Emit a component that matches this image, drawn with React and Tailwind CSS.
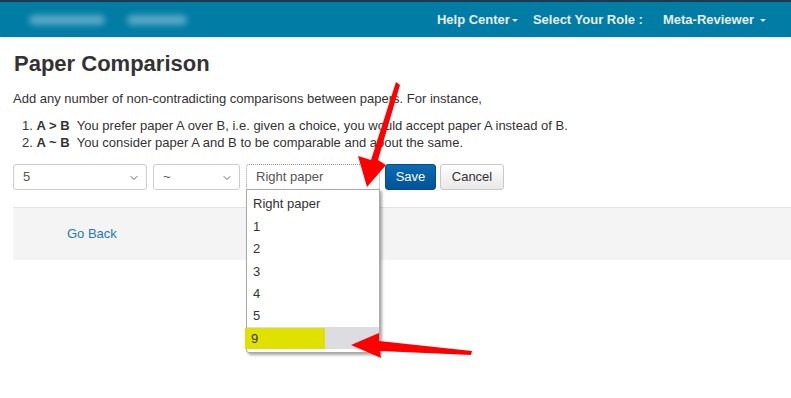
import { ChevronDown } from "lucide-react";

const font = { fontFamily: '"Liberation Sans", Arial, sans-serif' };

const Caret = () => (
	<span className="inline-block ml-[2px] align-middle w-0 h-0 border-l-[3px] border-r-[3px] border-t-[3px] border-l-transparent border-r-transparent border-t-[#dfe9ef]" />
);

const FakeSelect = ({ value, width, focused }) => (
	<div
		className={`relative flex items-center h-[26px] rounded-[3px] bg-white text-[13px] text-[#555] pl-[9px] ${
			focused ? "border border-dotted border-[#999]" : "border border-[#ccc]"
		}`}
		style={{ width }}>
		<span>{value}</span>
		{!focused && (
			<ChevronDown size={12} strokeWidth={2} className="absolute right-[6px] top-[7px] text-[#666]" />
		)}
	</div>
);

export default function App() {
	const options = ["Right paper", "1", "2", "3", "4", "5"];

	return (
		<div className="relative w-[791px] h-[398px] bg-white overflow-hidden text-[#333]" style={font}>
			{/* Navbar */}
			<div className="h-[2px] bg-[#22384f]" />
			<div className="h-[35px] bg-[#017ca4] flex items-center justify-between pr-[25px] shadow-[0_1px_2px_rgba(0,0,0,0.12)]">
				<div className="flex items-center gap-[22px] pl-[29px]">
					<div className="w-[76px] h-[10px] rounded-full bg-[#5aa9c6] blur-[3px]" />
					<div className="w-[60px] h-[10px] rounded-full bg-[#5aa9c6] blur-[3px]" />
				</div>
				<div className="flex items-center text-[13px] font-bold text-[#e6eef2]">
					<span>
						Help Center
						<Caret />
					</span>
					<span className="ml-[15px]">Select Your Role :</span>
					<span className="ml-[20px]">
						Meta-Reviewer
						<span className="ml-[4px]">
							<Caret />
						</span>
					</span>
				</div>
			</div>

			{/* Content */}
			<div className="pl-[13px]">
				<h1 className="text-[22px] font-bold mt-[14px] ml-[1px] leading-[26px]">Paper Comparison</h1>
				<p className="text-[13px] mt-[13px] leading-[18px]">
					Add any number of non-contradicting comparisons between papers. For instance,
				</p>
				<ol className="text-[13px] leading-[17px] mt-[9px] pl-[9px]">
					<li>
						1. <b>A &gt; B</b>&nbsp;&nbsp;You prefer paper A over B, i.e. given a choice, you would accept paper A instead of B.
					</li>
					<li>
						2. <b>A ~ B</b>&nbsp;&nbsp;You consider paper A and B to be comparable and about the same.
					</li>
				</ol>

				<div className="flex items-center mt-[13px]">
					<FakeSelect value="5" width={134} />
					<div className="w-[6px]" />
					<FakeSelect value="~" width={87} />
					<div className="w-[6px]" />
					<div className="relative">
						<FakeSelect value="Right paper" width={134} focused />
						<div className="absolute left-0 top-[25px] w-[134px] bg-white border border-[#a9a9a9] rounded-b-[3px] shadow-[2px_2px_3px_rgba(0,0,0,0.35)] z-10 text-[13px] text-[#333]">
							<div className="pt-[3px]">
								{options.map((o) => (
									<div key={o} className="h-[22.4px] flex items-center pl-[6px]">
										{o}
									</div>
								))}
								<div className="h-[22px] bg-[#dcdce1] flex items-center mb-[3px]">
									<div className="w-[80px] h-[21px] bg-[#e1e100] flex items-center pl-[6px] -ml-[2px]">9</div>
								</div>
							</div>
						</div>
					</div>
					<button className="ml-[5px] h-[26px] w-[51px] rounded-[3px] text-[13px] text-white bg-gradient-to-b from-[#0a6bb3] to-[#04529a] border border-[#044a8c]">
						Save
					</button>
					<button className="ml-[4px] h-[26px] w-[64px] rounded-[3px] text-[13px] text-[#333] bg-gradient-to-b from-white to-[#e8e8e8] border border-[#c8c8c8]">
						Cancel
					</button>
				</div>

				<div className="mt-[17px] h-[53px] bg-[#f4f4f4] border-t border-[#e3e3e3] flex items-center pl-[54px]">
					<span className="text-[13px] text-[#1f7bb0]">Go Back</span>
				</div>
			</div>

			{/* Annotation arrows */}
			<svg className="absolute inset-0 pointer-events-none z-20" width="791" height="398">
				<polygon points="396,82 400,85 378,160 386,165 367,187 358,156 371,160" fill="#ff0000" />
				<polygon points="472,351 471,355 380,351 381,358 351,345 379,333 379,341" fill="#ff0000" />
			</svg>
		</div>
	);
}
